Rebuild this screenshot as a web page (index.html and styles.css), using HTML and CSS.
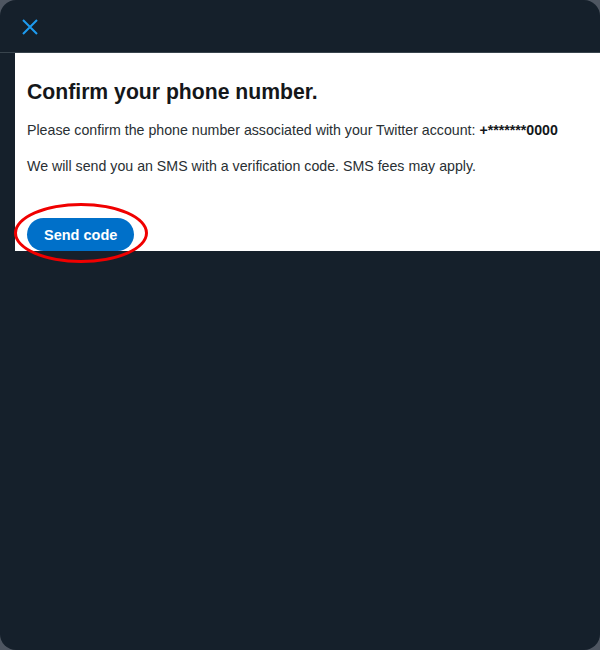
FILE: index.html
```html
<!DOCTYPE html>
<html>
<head>
<meta charset="utf-8">
<link rel="stylesheet" href="styles.css">
</head>
<body>
<div class="modal">
  <header class="topbar">
    <button class="close" aria-label="Close">
      <svg width="16" height="16" viewBox="0 0 16 16"><path d="M1 1 L15 15 M15 1 L1 15" stroke="#1d9bf0" stroke-width="2" fill="none"/></svg>
    </button>
  </header>
  <section class="panel">
    <h1 class="title">Confirm your phone number.</h1>
    <p class="text">Please confirm the phone number associated with your Twitter account: <strong>+*******0000</strong></p>
    <p class="text">We will send you an SMS with a verification code. SMS fees may apply.</p>
    <div class="actions">
      <button class="send">Send code</button>
      <span class="ring"></span>
    </div>
  </section>
</div>
</body>
</html>
```
FILE: styles.css
```css
html, body {
  margin: 0;
  padding: 0;
  background: #4e5661;
}
.modal {
  width: 600px;
  height: 650px;
  background: #15202b;
  border-radius: 16px;
  overflow: hidden;
  font-family: "Liberation Sans", Arial, sans-serif;
}
.topbar {
  height: 52px;
  border-bottom: 1px solid #38444d;
  display: flex;
  align-items: center;
  padding-left: 22px;
  box-sizing: content-box;
}
.close {
  background: none;
  border: 0;
  padding: 0;
  width: 16px;
  height: 16px;
  display: flex;
  margin-top: 1px;
}
.panel {
  margin-left: 15px;
  background: #fff;
  height: 198px;
  padding: 27px 12px 0;
  box-sizing: border-box;
}
.title {
  margin: 0 0 18px;
  font-size: 21.2px;
  font-weight: bold;
  color: #14171a;
  line-height: 24px;
}
.text {
  margin: 0 0 19px;
  font-size: 14.2px;
  line-height: 17px;
  color: #292f33;
}
.text strong {
  color: #14171a;
}
.actions {
  position: relative;
  margin-top: 43px;
  display: flex;
}
.send {
  background: #0070c9;
  color: #fff;
  border: 0;
  border-radius: 17px;
  height: 33px;
  padding: 0 17px;
  font-family: "Liberation Sans", Arial, sans-serif;
  font-weight: bold;
  font-size: 14.5px;
}
.ring {
  position: absolute;
  left: -13px;
  top: -15px;
  width: 134px;
  height: 60px;
  border: 3px solid #f00000;
  border-radius: 50%;
  box-sizing: border-box;
}
```
